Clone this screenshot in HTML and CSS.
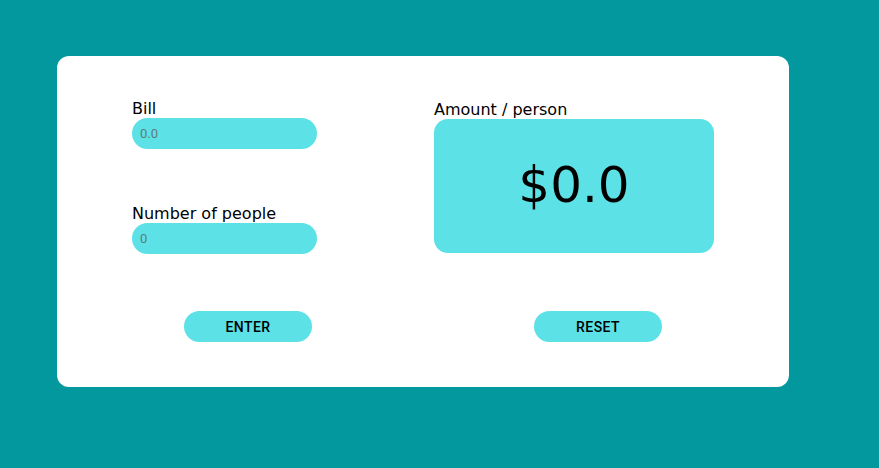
FILE: index.html
```html
<!DOCTYPE html>
<html>
<head>
<meta charset="utf-8">
<link rel="stylesheet" href="styles.css">
</head>
<body>
<main class="card">
  <div class="grid">
    <div class="left">
      <div class="field">
        <label class="label" for="bill">Bill</label>
        <input class="input" id="bill" type="text" placeholder="0.0">
      </div>
      <div class="field field-people">
        <label class="label" for="people">Number of people</label>
        <input class="input" id="people" type="text" placeholder="0">
      </div>
    </div>
    <div class="right">
      <div class="label">Amount / person</div>
      <div class="result">$0.0</div>
    </div>
  </div>
  <div class="actions">
    <button class="btn">ENTER</button>
    <button class="btn">RESET</button>
  </div>
</main>
</body>
</html>
```
FILE: styles.css
```css
html, body { margin: 0; padding: 0; }
body {
  background: #03989e;
  width: 879px;
  height: 468px;
  padding-top: 56px;
  box-sizing: border-box;
  font-family: "DejaVu Sans", sans-serif;
}
.card {
  margin-left: 57px;
  width: 732px;
  height: 331px;
  background: #ffffff;
  border-radius: 12px;
  box-sizing: border-box;
  padding: 44px 0 0 75px;
}
.grid {
  display: flex;
  gap: 117px;
}
.left { width: 185px; display: flex; flex-direction: column; }
.field { display: flex; flex-direction: column; }
.field-people { margin-top: 56px; }
.label {
  font-size: 16px;
  line-height: 18px;
  color: #000;
  display: block;
}
.input {
  width: 185px;
  height: 31px;
  border: none;
  border-radius: 16px;
  background: #5ce1e6;
  padding: 0 8px;
  box-sizing: border-box;
  font-family: Roboto, sans-serif;
  font-size: 13px;
  outline: none;
}
.input::placeholder { color: #607a7b; }
.right { display: flex; flex-direction: column; }
.right .label { margin-top: 1px; }
.result {
  width: 280px;
  height: 134px;
  background: #5ce1e6;
  border-radius: 14px;
  display: flex;
  align-items: center;
  justify-content: center;
  font-size: 50px;
  color: #000;
  padding-bottom: 2px;
  box-sizing: border-box;
}
.actions {
  display: flex;
  gap: 222px;
  padding-left: 52px;
  margin-top: 57px;
}
.btn {
  width: 128px;
  height: 31px;
  border: none;
  border-radius: 16px;
  background: #5ce1e6;
  font-family: Roboto, sans-serif;
  font-weight: 500;
  font-size: 14px;
  letter-spacing: 0.4px;
  color: #000;
  padding: 0;
}
```
